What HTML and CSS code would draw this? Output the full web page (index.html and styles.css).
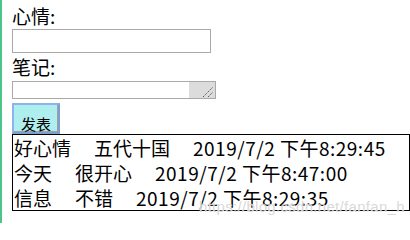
FILE: index.html
```html
<!DOCTYPE html>
<html lang="zh">
<head>
<meta charset="utf-8">
<title>心情笔记</title>
<link rel="stylesheet" href="styles.css">
</head>
<body>
<div class="page">
  <form class="form">
    <label class="label">心情:</label>
    <input class="input" type="text">
    <label class="label label-second">笔记:</label>
    <div class="textarea-wrap">
      <textarea class="textarea"></textarea>
      <span class="grip">
        <svg width="26" height="16" viewBox="0 0 26 16"><line x1="14" y1="15" x2="24" y2="5" stroke="#555" stroke-width="1" stroke-dasharray="1.4 1"/><line x1="19" y1="15" x2="24" y2="10" stroke="#555" stroke-width="1" stroke-dasharray="1.4 1"/></svg>
      </span>
    </div>
    <button class="btn" type="button">发表</button>
  </form>
  <div class="list">
    <div class="row"><span>好心情</span><span>五代十国</span><span class="date">2019/7/2 下午8:29:45</span></div>
    <div class="row"><span>今天</span><span>很开心</span><span class="date">2019/7/2 下午8:47:00</span></div>
    <div class="row"><span>信息</span><span>不错</span><span class="date">2019/7/2 下午8:29:35</span></div>
  </div>
  <div class="watermark">https://blog.csdn.net/fanfan_h</div>
</div>
</body>
</html>
```

FILE: styles.css
```css
html, body {
  margin: 0;
  padding: 0;
  background: #fff;
}
.page {
  position: relative;
  box-sizing: border-box;
  height: 223px;
  border-left: 2px solid #4cc38a;
  padding-left: 10px;
  padding-top: 3px;
  font-family: "Noto Sans CJK SC", "Microsoft YaHei", sans-serif;
  font-size: 19px;
  color: #000;
  overflow: hidden;
}
.form {
  display: flex;
  flex-direction: column;
  align-items: flex-start;
}
.label {
  display: block;
  line-height: 25px;
  height: 25px;
}
.input {
  box-sizing: border-box;
  width: 199px;
  height: 24px;
  margin: 1px 0 0 0;
  border: 1px solid #a9a9a9;
  padding: 0;
  outline: none;
}
.label-second {
  margin-top: 1px;
}
.textarea-wrap {
  position: relative;
  margin-top: 2px;
  width: 204px;
  height: 18px;
}
.textarea {
  box-sizing: border-box;
  display: block;
  width: 204px;
  height: 18px;
  margin: 0;
  padding: 0;
  border: 1px solid #a9a9a9;
  resize: none;
  overflow: hidden;
  outline: none;
}
.grip {
  position: absolute;
  right: 1px;
  top: 1px;
  width: 26px;
  height: 16px;
  background: #dcdcdc;
  overflow: hidden;
}
.grip svg {
  display: block;
}
.btn {
  box-sizing: border-box;
  margin-top: 4px;
  width: 48px;
  height: 31px;
  padding: 10px 0 0 0;
  background: #afeeee;
  border: 2px solid #8db4ee;
  border-right-color: #7c9fcf;
  border-bottom-color: #7c9fcf;
  box-shadow: inset -1px -1px 0 #a0a0a0;
  font-family: "Noto Sans CJK SC", "Microsoft YaHei", sans-serif;
  font-size: 15px;
  line-height: 15px;
  color: #000;
}
.list {
  border: 1px solid #000;
}
.row {
  display: flex;
  gap: 23px;
  line-height: 25px;
  height: 25px;
  padding-left: 1px;
  white-space: nowrap;
}
.date {
  letter-spacing: 0.5px;
}
.watermark {
  position: absolute;
  left: 197px;
  top: 196px;
  font-family: "Liberation Sans", Arial, sans-serif;
  font-size: 15px;
  letter-spacing: 0.3px;
  line-height: 22px;
  color: rgba(200, 200, 200, 0.7);
  text-shadow: 0 0 1px #fff;
  white-space: nowrap;
}
```
